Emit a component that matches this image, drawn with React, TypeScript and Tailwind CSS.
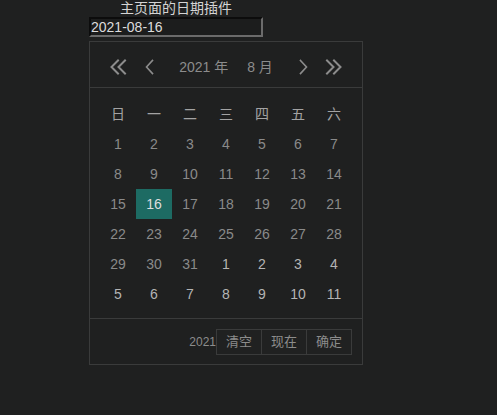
import React from "react";

const FONT = { fontFamily: '"Liberation Sans", "Noto Sans CJK SC", Arial, sans-serif' };

function DoubleLeft() {
  return (
    <svg width="18" height="16" viewBox="0 0 18 16" fill="none" stroke="#8c8c8c" strokeWidth="2" strokeLinecap="square">
      <path d="M9 1.5L2.5 8L9 14.5" />
      <path d="M16 1.5L9.5 8L16 14.5" />
    </svg>
  );
}
function DoubleRight() {
  return (
    <svg width="18" height="16" viewBox="0 0 18 16" fill="none" stroke="#8c8c8c" strokeWidth="2" strokeLinecap="square">
      <path d="M2 1.5L8.5 8L2 14.5" />
      <path d="M9 1.5L15.5 8L9 14.5" />
    </svg>
  );
}
function Left() {
  return (
    <svg width="9" height="16" viewBox="0 0 9 16" fill="none" stroke="#8c8c8c" strokeWidth="1.6" strokeLinecap="square">
      <path d="M7.5 1.5L1.5 8L7.5 14.5" />
    </svg>
  );
}
function Right() {
  return (
    <svg width="9" height="16" viewBox="0 0 9 16" fill="none" stroke="#8c8c8c" strokeWidth="1.6" strokeLinecap="square">
      <path d="M1.5 1.5L7.5 8L1.5 14.5" />
    </svg>
  );
}

const WEEK = ["日", "一", "二", "三", "四", "五", "六"];

type Day = { n: number; cur: boolean };

function buildDays(): Day[] {
  const days: Day[] = [];
  for (let i = 1; i <= 31; i++) days.push({ n: i, cur: true });
  for (let i = 1; i <= 11; i++) days.push({ n: i, cur: false });
  return days;
}

export default function App() {
  const days = buildDays();
  const rows: Day[][] = [];
  for (let i = 0; i < days.length; i += 7) rows.push(days.slice(i, i + 7));

  return (
    <div className="min-h-screen w-full bg-[#1f2020]" style={FONT}>
      <div className="ml-[89px] w-[174px] text-center text-[14px] leading-[17px] text-[#d4d4d4]">主页面的日期插件</div>
      <input
        readOnly
        value="2021-08-16"
        className="ml-[89px] block h-[20px] w-[174px] border-2 border-t-[#0c0c0c] border-l-[#0c0c0c] border-r-[#6b6b6b] border-b-[#6b6b6b] bg-[#1c1d1d] px-0 text-[14px] leading-[16px] text-[#dcdcdc] outline-none"
        style={FONT}
      />

      <div className="ml-[89px] mt-[4px] w-[274px] border border-[#3a3b3b]">
        <div className="flex h-[46px] items-center justify-center border-b border-[#3a3b3b] pt-[5px] text-[14px] text-[#8c8c8c]">
          <span className="flex"><DoubleLeft /></span>
          <span className="ml-[18px] flex"><Left /></span>
          <span className="ml-[25px]">2021 年</span>
          <span className="ml-[19px]">8 月</span>
          <span className="ml-[26px] flex"><Right /></span>
          <span className="ml-[17px] flex"><DoubleRight /></span>
        </div>

        <div className="px-[10px] pt-[11px] pb-[9px]">
          <div className="grid grid-cols-7">
            {WEEK.map(w => (
              <div key={w} className="flex h-[30px] items-center justify-center text-[14px] text-[#a3a3a3]">{w}</div>
            ))}
          </div>
          {rows.map((r, ri) => (
            <div key={ri} className="grid grid-cols-7">
              {r.map((d, di) => {
                const sel = d.cur && d.n === 16;
                return (
                  <div
                    key={di}
                    className={
                      sel
                        ? "flex h-[30px] items-center justify-center bg-[#1d6b63] text-[14px] text-[#dedede]"
                        : d.cur
                        ? "flex h-[30px] items-center justify-center text-[14px] text-[#8a8a8a]"
                        : "flex h-[30px] items-center justify-center text-[14px] text-[#b4b4b4]"
                    }
                  >
                    {d.n}
                  </div>
                );
              })}
            </div>
          ))}
        </div>

        <div className="flex h-[46px] items-center justify-end border-t border-[#3a3b3b] pr-[10px] text-[12px] text-[#8c8c8c]">
          <span>2021</span>
          <div className="flex h-[26px]">
            <button className="h-full w-[46px] border border-[#3a3b3b] bg-[#202121] text-[13px] text-[#8c8c8c]">清空</button>
            <button className="h-full w-[45px] border border-l-0 border-[#3a3b3b] bg-[#202121] text-[13px] text-[#8c8c8c]">现在</button>
            <button className="h-full w-[45px] border border-l-0 border-[#3a3b3b] bg-[#202121] text-[13px] text-[#8c8c8c]">确定</button>
          </div>
        </div>
      </div>
    </div>
  );
}
